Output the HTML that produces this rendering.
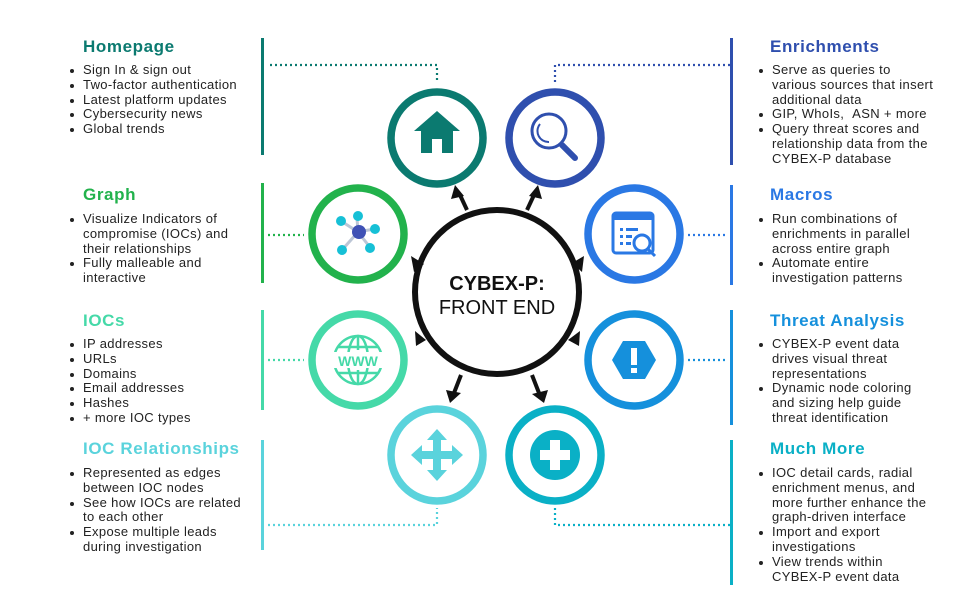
<!DOCTYPE html>
<html><head><meta charset="utf-8"><style>
body{margin:0;width:975px;height:610px;background:#fff;position:relative;overflow:hidden;font-family:"Liberation Sans",sans-serif;color:#222}
.b{position:absolute}
h2{position:absolute;margin:0;font-size:17px;letter-spacing:0.6px;font-weight:bold;line-height:20px}
ul{position:absolute;margin:0;padding:0;list-style:none;font-size:13px;letter-spacing:0.35px;line-height:14.8px;color:#222;white-space:nowrap}
li{position:relative;padding-left:13px}
li:before{content:"";position:absolute;left:0;top:6px;width:4px;height:4px;border-radius:50%;background:#222}
.bar{position:absolute;width:3px}
</style></head><body>
<svg class="b" style="left:0;top:0" width="975" height="610">
<g fill="none" stroke-width="2.2" stroke-dasharray="2 3">
<path d="M270 65H437V82" stroke="#0b7a70"/>
<path d="M555 82V65H731" stroke="#2f4fae"/>
<path d="M268 235H304" stroke="#22b24c"/>
<path d="M688 235H726" stroke="#2a78e4"/>
<path d="M268 360H304" stroke="#45d9a8"/>
<path d="M688 360H726" stroke="#1590dc"/>
<path d="M268 525H437V508" stroke="#5ad3dc"/>
<path d="M555 508V525H731" stroke="#0ab0c6"/>
</g>
<g fill="none" stroke-width="7.5">
<circle cx="437" cy="138" r="46" stroke="#0b7a70"/>
<circle cx="555" cy="138" r="46" stroke="#2f4fae"/>
<circle cx="358" cy="234" r="46" stroke="#22b24c"/>
<circle cx="634" cy="234" r="46" stroke="#2a78e4"/>
<circle cx="358" cy="360" r="46" stroke="#45d9a8"/>
<circle cx="634" cy="360" r="46" stroke="#1590dc"/>
<circle cx="437" cy="455" r="46" stroke="#5ad3dc"/>
<circle cx="555" cy="455" r="46" stroke="#0ab0c6"/>
</g>
<path d="M414 131L437 111L460 131H453V153H442V139H432V153H421V131Z" fill="#0b7a70"/>
<circle cx="549" cy="131" r="17" fill="none" stroke="#2f4fae" stroke-width="3"/>
<path d="M540 124a11 11 0 0 0 9 18" fill="none" stroke="#2f4fae" stroke-width="2"/>
<path d="M562 145L575 158" stroke="#2f4fae" stroke-width="6" stroke-linecap="round"/>
<g stroke="#bcc6d6" stroke-width="3"><path d="M358 232L341 221M358 232L357 218M358 232L374 229M358 232L342 250M358 232L369 246"/></g>
<g fill="#16c0d6"><circle cx="341" cy="221" r="5"/><circle cx="358" cy="216" r="5"/><circle cx="375" cy="229" r="5"/><circle cx="342" cy="250" r="5"/><circle cx="370" cy="248" r="5"/></g>
<circle cx="359" cy="232" r="7" fill="#3f51b5"/>
<rect x="613" y="213" width="40" height="40" rx="3" fill="none" stroke="#2a78e4" stroke-width="3"/>
<rect x="613" y="213" width="40" height="7" fill="#2a78e4"/>
<g fill="#2a78e4"><rect x="620" y="228" width="3" height="3"/><rect x="626" y="228" width="12" height="3"/><rect x="620" y="235" width="3" height="3"/><rect x="626" y="235" width="6" height="3"/><rect x="620" y="242" width="3" height="3"/><rect x="626" y="242" width="5" height="3"/></g>
<circle cx="642" cy="243" r="8" fill="#fff" stroke="#2a78e4" stroke-width="3"/>
<path d="M648 249L655 256" stroke="#2a78e4" stroke-width="3"/>
<g fill="none" stroke="#45d9a8" stroke-width="2.5"><circle cx="358" cy="360" r="24"/><ellipse cx="358" cy="360" rx="10" ry="24"/><path d="M358 336V350M358 370V384M338 347H378M338 373H378"/></g>
<rect x="330" y="352" width="56" height="16" fill="#fff"/>
<text x="358" y="366" text-anchor="middle" font-family="Liberation Sans" font-weight="bold" font-size="14" fill="#45d9a8">WWW</text>
<path d="M623 341H645L656 360L645 379H623L612 360Z" fill="#1590dc"/>
<rect x="631" y="348" width="6" height="17" fill="#fff"/><rect x="631" y="368" width="6" height="5" fill="#fff"/>
<path d="M437 429L447 440H441V451H452V445L463 455L452 465V459H441V470H447L437 481L427 470H433V459H422V465L411 455L422 445V451H433V440H427Z" fill="#5ad3dc"/>
<circle cx="555" cy="455" r="25" fill="#0ab0c6"/>
<path d="M550 440H560V450H570V460H560V470H550V460H540V450H550Z" fill="#fff"/>
<circle cx="497" cy="292" r="82" fill="#fff" stroke="#111" stroke-width="6"/>
<text x="497" y="290" text-anchor="middle" font-family="Liberation Sans" font-weight="bold" font-size="20" fill="#111">CYBEX-P:</text>
<text x="497" y="314" text-anchor="middle" font-family="Liberation Sans" font-size="20" fill="#111">FRONT END</text>
<g stroke="#111" stroke-width="4" fill="#111">
<path d="M467 210L460 195"/><path d="M527 210L534 195"/><path d="M461 375L454 393"/><path d="M532 375L539 393"/>
</g>
<g fill="#111">
<path d="M455 185L451 199L464 196Z"/><path d="M538 185L529 196L542 199Z"/>
<path d="M450 403L446 390L461 393Z"/><path d="M544 403L532 394L548 390Z"/>
<path d="M411 256L424 264L414 272Z"/><path d="M584 256L582 272L572 263Z"/>
<path d="M416 346L415 331L426 340Z"/><path d="M579 346L568 340L580 331Z"/>
</g>
</svg>

<div class="bar" style="left:261px;top:38px;height:117px;background:#0b7a70"></div>
<div class="bar" style="left:261px;top:183px;height:100px;background:#22b24c"></div>
<div class="bar" style="left:261px;top:310px;height:100px;background:#45d9a8"></div>
<div class="bar" style="left:261px;top:440px;height:110px;background:#5ad3dc"></div>
<div class="bar" style="left:730px;top:38px;height:127px;background:#2f4fae"></div>
<div class="bar" style="left:730px;top:185px;height:100px;background:#2a78e4"></div>
<div class="bar" style="left:730px;top:310px;height:115px;background:#1590dc"></div>
<div class="bar" style="left:730px;top:440px;height:145px;background:#0ab0c6"></div>

<h2 style="left:83px;top:37px;color:#0b7a70">Homepage</h2>
<ul style="left:70px;top:63px"><li>Sign In &amp; sign out</li><li>Two-factor authentication</li><li>Latest platform updates</li><li>Cybersecurity news</li><li>Global trends</li></ul>
<h2 style="left:83px;top:185px;color:#22b24c">Graph</h2>
<ul style="left:70px;top:212px"><li>Visualize Indicators of<br>compromise (IOCs) and<br>their relationships</li><li>Fully malleable and<br>interactive</li></ul>
<h2 style="left:83px;top:311px;color:#45d9a8">IOCs</h2>
<ul style="left:70px;top:337px"><li>IP addresses</li><li>URLs</li><li>Domains</li><li>Email addresses</li><li>Hashes</li><li>+ more IOC types</li></ul>
<h2 style="left:83px;top:439px;color:#5ad3dc">IOC Relationships</h2>
<ul style="left:70px;top:466px"><li>Represented as edges<br>between IOC nodes</li><li>See how IOCs are related<br>to each other</li><li>Expose multiple leads<br>during investigation</li></ul>

<h2 style="left:770px;top:37px;color:#2f4fae">Enrichments</h2>
<ul style="left:759px;top:63px"><li>Serve as queries to<br>various sources that insert<br>additional data</li><li>GIP, WhoIs, &nbsp;ASN + more</li><li>Query threat scores and<br>relationship data from the<br>CYBEX-P database</li></ul>
<h2 style="left:770px;top:185px;color:#2a78e4">Macros</h2>
<ul style="left:759px;top:212px"><li>Run combinations of<br>enrichments in parallel<br>across entire graph</li><li>Automate entire<br>investigation patterns</li></ul>
<h2 style="left:770px;top:311px;color:#1590dc">Threat Analysis</h2>
<ul style="left:759px;top:337px"><li>CYBEX-P event data<br>drives visual threat<br>representations</li><li>Dynamic node coloring<br>and sizing help guide<br>threat identification</li></ul>
<h2 style="left:770px;top:439px;color:#0ab0c6">Much More</h2>
<ul style="left:759px;top:466px"><li>IOC detail cards, radial<br>enrichment menus, and<br>more further enhance the<br>graph-driven interface</li><li>Import and export<br>investigations</li><li>View trends within<br>CYBEX-P event data</li></ul>
</body></html>
